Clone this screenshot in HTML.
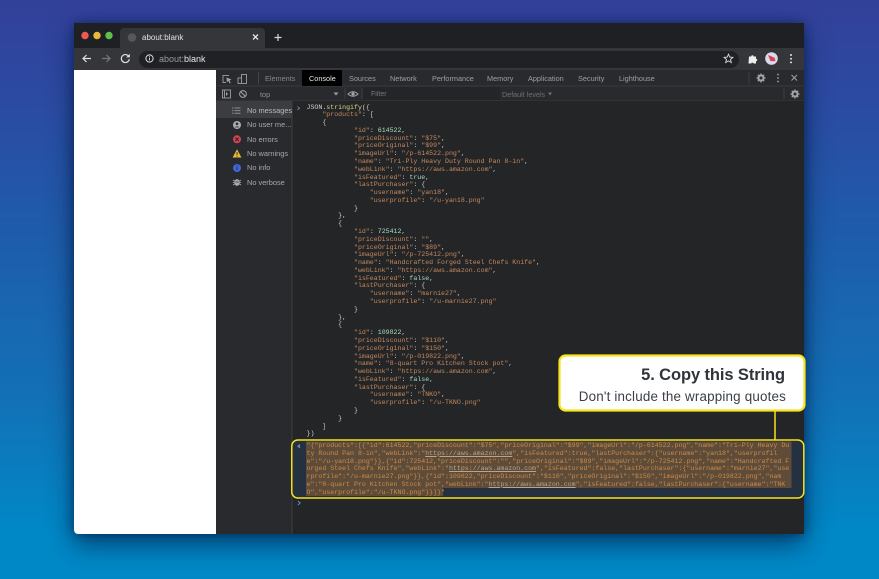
<!DOCTYPE html>
<html><head><meta charset="utf-8">
<style>
html,body{margin:0;padding:0;width:879px;height:579px;overflow:hidden}
body{position:relative;background:linear-gradient(180deg,#33409a 0%,#2b4ba2 18%,#1e5cab 40%,#1370b6 68%,#0088c6 92%,#0088c6 100%);font-family:"Liberation Sans",sans-serif}
.a{position:absolute;white-space:pre;filter:blur(.3px)}
#win{position:absolute;left:74px;top:23px;width:730px;height:511px;background:#292a2d;border-radius:4px;overflow:hidden;box-shadow:0 10px 26px rgba(0,25,65,.65),0 0 10px rgba(0,20,60,.45)}
.t{font-size:7.3px;color:#9aa0a6;top:72.5px;line-height:12px}
.s{font-size:7.4px;color:#a6a8ab;left:247px;line-height:10px}
pre{margin:0;position:absolute;font-family:"Liberation Mono",monospace;font-size:6.6px;line-height:7.78px;white-space:pre;color:#cfcfcf;filter:blur(.35px)}
.k{color:#c4895e}.n{color:#a7dcc0}.f{color:#dcd28c}
u{text-decoration:underline;color:#b8a48f}
</style></head><body>
<div id="win"></div>
<svg class="a" style="left:0;top:0" width="879" height="579">
<!-- chrome -->
<rect x="74" y="23" width="730" height="25" fill="#1f2023"/>
<path d="M120 48V32a4 4 0 0 1 4-4h137a4 4 0 0 1 4 4v16z" fill="#35363a"/>
<rect x="74" y="48" width="730" height="22" fill="#35363a"/>
<rect x="139" y="51" width="600" height="17" rx="8.5" fill="#202124"/>
<circle cx="85" cy="35.5" r="3.7" fill="#ee5a52"/><circle cx="97" cy="35.5" r="3.7" fill="#e8b93c"/><circle cx="109" cy="35.5" r="3.7" fill="#5cc04a"/>
<circle cx="132" cy="37.5" r="4.3" fill="#55575b"/>
<path d="M253 34.5l5 5m0-5l-5 5" stroke="#e4e5e7" stroke-width="1.3"/>
<path d="M278 34v7m-3.5-3.5h7" stroke="#d5d6d8" stroke-width="1.2"/>
<path d="M91 58.5h-8m3.5-3.5l-3.5 3.5 3.5 3.5" stroke="#dfe1e4" stroke-width="1.2" fill="none"/>
<path d="M102 58.5h8m-3.5-3.5l3.5 3.5-3.5 3.5" stroke="#77797d" stroke-width="1.2" fill="none"/>
<path d="M128.6 56.2a4 4 0 1 0 .7 3" stroke="#dfe1e4" stroke-width="1.2" fill="none"/><path d="M129.8 53.8v3.6h-3.6z" fill="#dfe1e4"/>
<circle cx="149.5" cy="58.5" r="3.6" stroke="#e0e1e3" stroke-width="1" fill="none"/><path d="M149.5 57.8v2.6M149.5 56.2v.9" stroke="#e0e1e3" stroke-width=".9"/>
<path d="M728.5 54.2l1.3 2.9 3.1.3-2.4 2.1.8 3.1-2.8-1.7-2.8 1.7.8-3.1-2.4-2.1 3.1-.3z" stroke="#dadbdd" stroke-width=".9" fill="none"/>
<path d="M749 56.5h2.2a1.2 1.2 0 0 1 2.4 0h2.4v2.3a1.2 1.2 0 0 1 0 2.4v2.3h-2.5a1.2 1.2 0 0 0-2.3 0h-2.7z" fill="#eceded"/>
<circle cx="771.5" cy="58.5" r="6.3" fill="#d7d9ee"/><path d="M768 55l6.5 2.6 1 3.5h-5z" fill="#d8434c"/>
<circle cx="791" cy="55" r="1" fill="#dfe0e2"/><circle cx="791" cy="58.7" r="1" fill="#dfe0e2"/><circle cx="791" cy="62.4" r="1" fill="#dfe0e2"/>
<!-- page -->
<path d="M74 70h142v464H78a4 4 0 0 1-4-4z" fill="#fff"/>
<!-- devtools -->
<rect x="216" y="70" width="588" height="464" fill="#292a2d"/>
<rect x="216" y="85.5" width="588" height="1" fill="#3a3b3e"/>
<rect x="216" y="100.5" width="588" height="1" fill="#3a3b3e"/>
<rect x="302" y="70" width="40" height="16" fill="#000"/>
<path d="M258.5 72v12" stroke="#444548"/>
<path d="M345 88v11" stroke="#3e3f42"/><path d="M362 88v11" stroke="#3e3f42"/><path d="M749 72v12M784 88v11" stroke="#3e3f42"/>
<rect x="363" y="87" width="137" height="13" fill="#242528"/>
<rect x="216" y="101" width="76" height="17" fill="#3c3d40"/>
<rect x="292" y="101" width="512" height="433" fill="#242527"/>
<path d="M292 101v433" stroke="#3d3e41"/>
<!-- dt icons -->
<path d="M229 75.5h-6v7h3" stroke="#8f9296" fill="none"/><path d="M226.5 77.5l5 2-2 1 1.2 2.5-1 .5-1.2-2.5-1.6 1.3z" fill="#a0a3a7"/>
<rect x="241.5" y="74.5" width="5" height="9" stroke="#8f9296" fill="none"/><rect x="238" y="78" width="3.5" height="5.5" stroke="#8f9296" fill="none"/>
<rect x="222.5" y="90" width="8" height="8" stroke="#8f9296" fill="none"/><path d="M226 92v4l2-2z" fill="#a0a3a7"/><path d="M224.5 90v8" stroke="#8f9296"/>
<circle cx="243" cy="94" r="3.4" stroke="#a0a3a7" stroke-width="1" fill="none"/><path d="M240.6 91.6l4.8 4.8" stroke="#a0a3a7"/>
<path d="M333.5 92.5h5l-2.5 3z" fill="#9b9da1"/>
<path d="M348 94q5-4.5 10 0q-5 4.5-10 0z" stroke="#a5a7ab" fill="none"/><circle cx="353" cy="94" r="1.6" fill="#a5a7ab"/>
<path d="M548 92.5h4l-2 3z" fill="#6e7074"/>
<g fill="#a0a3a7"><circle cx="761" cy="78" r="3.6"/><circle cx="795" cy="94" r="3.6"/></g>
<g stroke="#a0a3a7" stroke-width="1.3"><path d="M761 73.5v9M756.5 78h9M757.8 74.8l6.4 6.4M764.2 74.8l-6.4 6.4M795 89.5v9M790.5 94h9M791.8 90.8l6.4 6.4M798.2 90.8l-6.4 6.4"/></g>
<circle cx="761" cy="78" r="1.5" fill="#292a2d"/><circle cx="795" cy="94" r="1.5" fill="#292a2d"/>
<g fill="#a0a3a7"><circle cx="778" cy="74.5" r=".9"/><circle cx="778" cy="78" r=".9"/><circle cx="778" cy="81.5" r=".9"/></g>
<path d="M791.5 75l5.5 5.5m0-5.5l-5.5 5.5" stroke="#a0a3a7" stroke-width="1"/>
<!-- sidebar icons -->
<path d="M232 108h1.5m1 0h6M232 110.6h1.5m1 0h6M232 113.2h1.5m1 0h6" stroke="#8c8e92"/>
<circle cx="237" cy="125" r="4" fill="#a9abae"/><circle cx="237" cy="123.8" r="1.3" fill="#292a2d"/><path d="M234.7 127.4a2.6 2 0 0 1 4.6 0z" fill="#292a2d"/>
<circle cx="237" cy="139.3" r="4" fill="#d8414e"/><path d="M235.3 137.6l3.4 3.4m0-3.4l-3.4 3.4" stroke="#292a2d" stroke-width="1"/>
<path d="M237 149.3l4.4 8.2h-8.8z" fill="#e8b93c"/><path d="M237 152v3m0 .8v.9" stroke="#292a2d" stroke-width=".9"/>
<circle cx="237" cy="168" r="4" fill="#3f68d6"/><path d="M237 167v3.2M237 165.3v1" stroke="#1f2a55" stroke-width=".9"/>
<ellipse cx="237" cy="182.5" rx="2.6" ry="3.4" fill="#a9abae"/><path d="M233 180l8 5M233 185l8-5M232.8 182.5h8.4" stroke="#a9abae" stroke-width=".8"/><path d="M235.5 182h3" stroke="#292a2d" stroke-width=".8"/>
<path d="M297.5 106.5l2 1.7-2 1.7" stroke="#9a9c9f" stroke-width=".7" fill="none"/>
<!-- result row -->
<rect x="293" y="441" width="510" height="57" fill="#253040"/>
<path d="M306 441.5h485.500V488H443v8H306z" fill="#5f4c38"/>
<path d="M300 444.5l-2.2 1.7 2.2 1.700" stroke="#8a9bd0" stroke-width=".8" fill="none"/>
<circle cx="299.500" cy="446.200" r=".6" fill="#8a9bd0"/>
<path d="M298 501l2.200 2-2.200 2" stroke="#5f8fe0" stroke-width=".9" fill="none"/>
<!-- annotation -->
<rect x="291.800" y="440" width="512" height="58" rx="6" fill="none" stroke="#f7e41c" stroke-width="1.500"/>
<path d="M775 410v30" stroke="#f7e41c" stroke-width="1.500"/>
<rect x="559.500" y="355.500" width="245" height="55" rx="6" fill="#fff" stroke="#f7e41c" stroke-width="2.200"/>
</svg>

<div class="a" style="left:142px;top:32px;font-size:8px;line-height:11px;color:#dfe0e2">about:blank</div>
<div class="a" style="left:159px;top:53.500px;font-size:9px;line-height:11px;color:#97999d">about:<span style="color:#e6e7e9">blank</span></div>

<div class="a t" style="left:265px;color:#85878b">Elements</div>
<div class="a t" style="left:309px;color:#e3e4e6">Console</div>
<div class="a t" style="left:349px">Sources</div>
<div class="a t" style="left:390px">Network</div>
<div class="a t" style="left:432px">Performance</div>
<div class="a t" style="left:487px">Memory</div>
<div class="a t" style="left:528px">Application</div>
<div class="a t" style="left:578px">Security</div>
<div class="a t" style="left:619px">Lighthouse</div>
<div class="a" style="left:260px;top:88.500px;font-size:7.300px;line-height:11px;color:#8e9094">top</div>
<div class="a" style="left:371px;top:89px;font-size:7px;line-height:11px;color:#77797d">Filter</div>
<div class="a" style="left:502px;top:89px;font-size:7.200px;line-height:11px;color:#6e7074">Default levels</div>

<div class="a s" style="top:105.500px;color:#b8babd">No messages</div>
<div class="a s" style="top:120px">No user me...</div>
<div class="a s" style="top:134.500px">No errors</div>
<div class="a s" style="top:148.500px">No warnings</div>
<div class="a s" style="top:163px">No info</div>
<div class="a s" style="top:177.500px">No verbose</div>

<pre style="left:306.500px;top:103.500px">JSON.<span class="f">stringify</span>({
    <span class="k">"products"</span>: [
    {
            <span class="k">"id"</span>: <span class="n">614522</span>,
            <span class="k">"priceDiscount"</span>: <span class="k">"$75"</span>,
            <span class="k">"priceOriginal"</span>: <span class="k">"$99"</span>,
            <span class="k">"imageUrl"</span>: <span class="k">"/p-614522.png"</span>,
            <span class="k">"name"</span>: <span class="k">"Tri-Ply Heavy Duty Round Pan 8-in"</span>,
            <span class="k">"webLink"</span>: <span class="k">"https://aws.amazon.com"</span>,
            <span class="k">"isFeatured"</span>: <span class="n">true</span>,
            <span class="k">"lastPurchaser"</span>: {
                <span class="k">"username"</span>: <span class="k">"yan18"</span>,
                <span class="k">"userprofile"</span>: <span class="k">"/u-yan18.png"</span>
            }
        },
        {
            <span class="k">"id"</span>: <span class="n">725412</span>,
            <span class="k">"priceDiscount"</span>: <span class="k">""</span>,
            <span class="k">"priceOriginal"</span>: <span class="k">"$89"</span>,
            <span class="k">"imageUrl"</span>: <span class="k">"/p-725412.png"</span>,
            <span class="k">"name"</span>: <span class="k">"Handcrafted Forged Steel Chefs Knife"</span>,
            <span class="k">"webLink"</span>: <span class="k">"https://aws.amazon.com"</span>,
            <span class="k">"isFeatured"</span>: <span class="n">false</span>,
            <span class="k">"lastPurchaser"</span>: {
                <span class="k">"username"</span>: <span class="k">"marnie27"</span>,
                <span class="k">"userprofile"</span>: <span class="k">"/u-marnie27.png"</span>
            }
        },
        {
            <span class="k">"id"</span>: <span class="n">109822</span>,
            <span class="k">"priceDiscount"</span>: <span class="k">"$110"</span>,
            <span class="k">"priceOriginal"</span>: <span class="k">"$150"</span>,
            <span class="k">"imageUrl"</span>: <span class="k">"/p-019822.png"</span>,
            <span class="k">"name"</span>: <span class="k">"8-quart Pro Kitchen Stock pot"</span>,
            <span class="k">"webLink"</span>: <span class="k">"https://aws.amazon.com"</span>,
            <span class="k">"isFeatured"</span>: <span class="n">false</span>,
            <span class="k">"lastPurchaser"</span>: {
                <span class="k">"username"</span>: <span class="k">"TNKO"</span>,
                <span class="k">"userprofile"</span>: <span class="k">"/u-TKNO.png"</span>
            }
        }
    ]
})</pre>

<pre style="left:306.500px;top:442px;line-height:7.760px;color:#c98a50">"{"products":[{"id":614522,"priceDiscount":"$75","priceOriginal":"$99","imageUrl":"/p-614522.png","name":"Tri-Ply Heavy Du
ty Round Pan 8-in","webLink":"<u>https://aws.amazon.com</u>","isFeatured":true,"lastPurchaser":{"username":"yan18","userprofil
e":"/u-yan18.png"}},{"id":725412,"priceDiscount":"","priceOriginal":"$89","imageUrl":"/p-725412.png","name":"Handcrafted F
orged Steel Chefs Knife","webLink":"<u>https://aws.amazon.com</u>","isFeatured":false,"lastPurchaser":{"username":"marnie27","use
rprofile":"/u-marnie27.png"}},{"id":109822,"priceDiscount":"$110","priceOriginal":"$150","imageUrl":"/p-019822.png","nam
e":"8-quart Pro Kitchen Stock pot","webLink":"<u>https://aws.amazon.com</u>","isFeatured":false,"lastPurchaser":{"username":"TNK
O","userprofile":"/u-TKNO.png"}}]}"</pre>

<div class="a" style="right:94px;top:365px;font-size:16.500px;line-height:20px;font-weight:bold;letter-spacing:-.1px;color:#2f353b">5. Copy this String</div>
<div class="a" style="right:93px;top:387.500px;font-size:13.400px;line-height:17px;letter-spacing:.18px;color:#3a4046">Don't include the wrapping quotes</div>
</body></html>
